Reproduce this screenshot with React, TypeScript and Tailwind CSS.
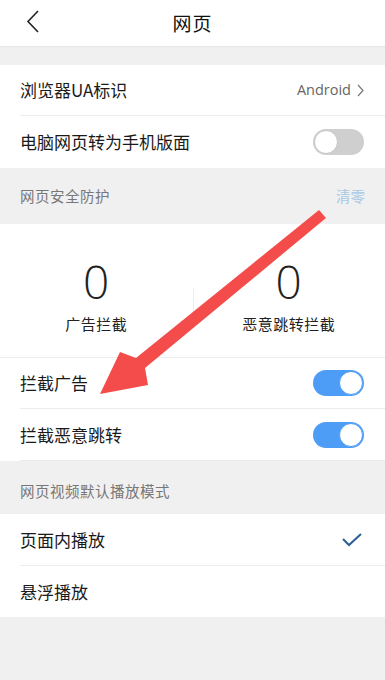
const font = { fontFamily: '"Noto Sans CJK SC", "Noto Sans", sans-serif' };

function Toggle({ on }: { on: boolean }) {
  return on ? (
    <div className="w-[51px] h-[26px] rounded-full bg-[#4d9cf5] flex items-center justify-end pr-[1px]">
      <div className="w-[24px] h-[24px] rounded-full bg-white border border-[#4d9cf5]" />
    </div>
  ) : (
    <div className="w-[51px] h-[26px] rounded-full bg-[#cfcfcf] flex items-center pl-[1px]">
      <div className="w-[24px] h-[24px] rounded-full bg-white border border-[#c4c4c4]" />
    </div>
  );
}

function Row({
  label,
  h = 'h-[51px]',
  last = false,
  children,
}: {
  label: string;
  h?: string;
  last?: boolean;
  children?: React.ReactNode;
}) {
  return (
    <div className="bg-white pl-5">
      <div
        className={`${h} flex items-center justify-between pr-[21px] ${
          last ? '' : 'border-b border-[#ececec]'
        }`}
      >
        <span className="text-[17px] text-[#1a1a1a]">{label}</span>
        {children}
      </div>
    </div>
  );
}

function SectionHeader({ title, right }: { title: string; right?: string }) {
  return (
    <div className="flex items-center justify-between px-5 text-[14.5px]">
      <span className="text-[#777] tracking-[0.5px]">{title}</span>
      {right && <span className="text-[#a9c8e6]">{right}</span>}
    </div>
  );
}

export default function App() {
  return (
    <div className="relative w-full h-[680px] bg-[#f0f0f0] overflow-hidden" style={font}>
      {/* header */}
      <div className="h-[47px] bg-white border-b border-[#e6e6e6] flex items-center relative">
        <svg className="absolute left-[26px] top-[10px]" width="14" height="23" viewBox="0 0 14 23">
          <path d="M12 1 L2 11.5 L12 22" fill="none" stroke="#222" strokeWidth="1.6" />
        </svg>
        <div className="flex-1 text-center text-[19px] text-[#111] tracking-[1px]">网页</div>
      </div>

      <div className="h-[18px]" />

      <Row label="浏览器UA标识" h="h-[51px]">
        <span className="flex items-center gap-[6px] text-[14.5px] text-[#666]" style={{ fontFamily: '"Open Sans", "Noto Sans", sans-serif' }}>
          Android
          <svg width="7" height="13" viewBox="0 0 7 13">
            <path d="M1 1 L6 6.5 L1 12" fill="none" stroke="#777" strokeWidth="1.2" />
          </svg>
        </span>
      </Row>
      <Row label="电脑网页转为手机版面" h="h-[52px]" last>
        <Toggle on={false} />
      </Row>

      <div className="h-[56px] flex items-center">
        <div className="w-full">
          <SectionHeader title="网页安全防护" right="清零" />
        </div>
      </div>

      {/* stats */}
      <div className="bg-white pl-5">
        <div className="h-[134px] border-b border-[#ececec] -ml-5 pl-0 grid grid-cols-2 items-center">
          <div className="flex flex-col items-center pt-[8px]">
            <span className="text-[46px] leading-[56px] font-light text-[#222]" style={{ fontFamily: '"Open Sans", sans-serif' }}>0</span>
            <span className="text-[15px] text-[#222] mt-[4px] tracking-[0.5px]">广告拦截</span>
          </div>
          <div className="flex flex-col items-center pt-[8px] relative">
            <div className="absolute left-0 top-[43px] h-[28px] w-px bg-[#ededed]" />
            <span className="text-[46px] leading-[56px] font-light text-[#222]" style={{ fontFamily: '"Open Sans", sans-serif' }}>0</span>
            <span className="text-[15px] text-[#222] mt-[4px] tracking-[0.5px]">恶意跳转拦截</span>
          </div>
        </div>
      </div>

      <Row label="拦截广告" h="h-[51px]">
        <Toggle on />
      </Row>
      <Row label="拦截恶意跳转" h="h-[52px]">
        <Toggle on />
      </Row>

      <div className="h-[53px] flex items-center pt-[6px]">
        <div className="w-full">
          <SectionHeader title="网页视频默认播放模式" />
        </div>
      </div>

      <div className="bg-white pl-6">
        <div className="h-[52px] flex items-center justify-between pr-[23px] border-b border-[#ececec] -ml-1">
          <span className="text-[17px] text-[#1a1a1a]">页面内播放</span>
          <svg width="20" height="14" viewBox="0 0 20 14">
            <path d="M1 6 L7 12 L19 1" fill="none" stroke="#2c5f99" strokeWidth="2" />
          </svg>
        </div>
      </div>
      <Row label="悬浮播放" h="h-[51px]" last />

      {/* annotation arrow */}
      <svg className="absolute left-0 top-0 pointer-events-none" width="385" height="680" viewBox="0 0 385 680">
        <polygon
          points="319,210 326,218 145,368 148,385 100,394 120,352 136,358"
          fill="#f44c4a"
        />
      </svg>
    </div>
  );
}
